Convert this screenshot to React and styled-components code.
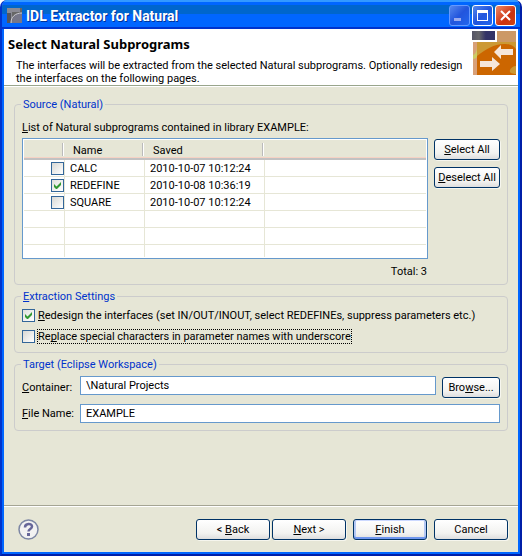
import React, { useState } from "react";
import styled, { createGlobalStyle, css } from "styled-components";

const GlobalStyle = createGlobalStyle`
  *, *::before, *::after {
    box-sizing: border-box;
  }

  body {
    margin: 0;
    background: #fff;
    color: #000;
    font: 11px/13px "Roboto", sans-serif;
  }
`;

const Dialog = styled.main`
  display: flex;
  flex-direction: column;
  min-height: calc(100vh - 1px);
  margin-right: 1px;
  padding: 0 2px 2px;
  border: 2px solid;
  border-top: 0;
  border-color: #001fa8 #001fa8 #001fa8 #0033cc;
  border-radius: 7px 7px 0 0;
  box-shadow: inset 0 0 0 2px #0066ff;
  background: #e6e6d6;
  overflow: hidden;
`;

const TitleBar = styled.header`
  display: flex;
  align-items: center;
  gap: 3px;
  height: 29px;
  margin: 0 -2px;
  padding: 2px 4px 0 5px;
  background: linear-gradient(
    #3399ff 0 2px,
    #0066ff 2px 5px,
    #0066cc 5px 14px,
    #0066ff 14px 27px,
    #0033cc 27px
  );
`;

const WindowTitle = styled.h1`
  flex: 1;
  margin: 0;
  color: #fff;
  font: bold 14px/18px "Roboto", sans-serif;
  text-shadow: 1px 1px #003399;
  white-space: nowrap;
`;

const CaptionButton = styled.button`
  width: 21px;
  height: 21px;
  padding: 0;
  border: 1px solid ${({ $dim }) => ($dim ? "#6699ff" : "#fff")};
  border-radius: 3px;
  background: ${({ $close }) =>
    $close
      ? "linear-gradient(135deg, #ee8866, #cc3311 60%, #cc4411)"
      : "linear-gradient(135deg, #5588ee, #2255dd 50%, #2266ee)"};

  svg {
    display: block;
  }
`;

const CaptionButtons = styled.div`
  display: flex;
  gap: 2px;
`;

const Banner = styled.div`
  display: flex;
  justify-content: space-between;
  height: 57px;
  padding: 0 2px 0 4px;
  border-bottom: 1px solid #99a58c;
  box-shadow: 0 1px #fff;
  background: #fff;
`;

const BannerTitle = styled.h2`
  margin: 7px 0;
  font: bold 13px/16px "Noto Sans", sans-serif;
`;

const BannerText = styled.p`
  max-width: 464px;
  margin: 0;
  padding-left: 8px;
`;

const BannerImage = styled.svg`
  flex: none;
  margin-top: 2px;
`;

const Content = styled.div`
  display: flex;
  flex: 1;
  flex-direction: column;
  gap: 5px;
  padding: 12px 10px;
`;

const Group = styled.fieldset`
  min-width: 0;
  margin: 0;
  padding: ${({ $top }) => $top}px 7px ${({ $bottom }) => $bottom}px;
  border: 1px solid #cccccc;
  border-radius: 4px;
`;

const Legend = styled.legend`
  margin-left: -1px;
  padding: 0 2px;
  color: #0033cc;
`;

const Mnemonic = styled.u`
  text-underline-offset: 1px;
  text-decoration-thickness: 1px;
  text-decoration-skip-ink: none;
`;

const SourceGrid = styled.div`
  display: grid;
  grid-template-columns: 1fr 66px;
  column-gap: 6px;
  margin-top: 4px;
`;

const TableBox = styled.div`
  padding: 1px;
  border: 1px solid #6699cc;
  background: #fff;
`;

const Table = styled.table`
  width: 100%;
  border-collapse: separate;
  border-spacing: 0;
  table-layout: fixed;
`;

const HeadCell = styled.th`
  position: relative;
  height: 20px;
  padding: 2px 0 0 8px;
  border-bottom: 2px solid #c2c2c2;
  background: linear-gradient(#e6e6d6 17px, #f6d2c4 17px);
  font-weight: normal;
  text-align: left;

  &:not(:last-child)::after {
    content: "";
    position: absolute;
    top: 3px;
    right: 1px;
    width: 2px;
    height: 13px;
    border-left: 1px solid #bbbbbb;
    background: #fff;
  }
`;

const Cell = styled.td`
  height: ${({ $last }) => ($last ? 12 : 17)}px;
  padding: 1px 0 0 5px;
  border: solid #e6e6d6;
  border-width: 0 1px ${({ $last }) => ($last ? 0 : 1)}px 0;

  &:first-child {
    padding: 0;
  }

  &:last-child {
    border-right: 0;
  }
`;

const CheckBox = styled.input.attrs({ type: "checkbox" })`
  flex: none;
  appearance: none;
  display: block;
  width: 13px;
  height: 13px;
  margin: 0;
  border: 1px solid #336699;
  background: linear-gradient(135deg, #d8d8d4, #fff);

  td > & {
    margin-left: auto;
  }

  &:checked {
    background:
      url("data:image/svg+xml,%3Csvg xmlns='http://www.w3.org/2000/svg' viewBox='0 0 11 11'%3E%3Cpath d='M2 4v3l2 2h1l4-4V2L4.500 6.500z' fill='%23339933'/%3E%3C/svg%3E"),
      linear-gradient(135deg, #e0e0dc, #fff);
  }

  &:focus {
    outline: none;
  }
`;

const SideButtons = styled.div`
  display: flex;
  flex-direction: column;
  gap: 7px;
  padding-top: 1px;
`;

const Button = styled.button`
  width: ${({ $width }) => ($width ? `${$width}px` : "100%")};
  height: 21px;
  padding: 0;
  border: 1px solid #003366;
  border-radius: 3px;
  background: linear-gradient(#fff, #f2f2f0 70%, #dedede);
  box-shadow: 1px 1px #f6f6ee;
  color: #000;
  font: inherit;
  white-space: nowrap;

  ${({ $primary }) =>
    $primary &&
    css`
      box-shadow:
        inset 0 -2px #6f96ee,
        inset 0 1px #ccd9ff,
        inset 2px 0 #b4c8f4,
        inset -2px 0 #b4c8f4,
        1px 1px #f6f6ee;
    `}
`;

const Total = styled.div`
  margin: 6px 73px 0 0;
  text-align: right;
`;

const OptionRow = styled.div`
  display: flex;
  align-items: center;
  gap: 2px;
  height: 15px;

  & + & {
    margin-top: 6px;
  }
`;

const OptionLabel = styled.label`
  border: 1px ${({ $focused }) => ($focused ? "dotted #000" : "solid transparent")};
  white-space: nowrap;
`;

const TargetRow = styled.div`
  display: flex;
  min-height: ${({ $tall }) => ($tall ? 22 : 19)}px;

  & + & {
    margin-top: 6px;
  }
`;

const FieldLabel = styled.label`
  align-self: center;
  width: 58px;
`;

const TextField = styled.input.attrs({ type: "text" })`
  flex: 1;
  min-width: 0;
  height: 19px;
  padding: 0 5px;
  border: 1px solid #6699cc;
  background: #fff;
  color: #000;
  font: inherit;

  &:focus {
    outline: none;
  }
`;

const BrowseSlot = styled.div`
  align-self: flex-end;
  margin-left: 6px;
`;

const Footer = styled.footer`
  display: flex;
  align-items: flex-start;
  height: 47px;
  padding: 13px 10px 0 14px;
  border-top: 1px solid #a5a594;
  box-shadow: inset 0 1px #fff;
`;

const HelpButton = styled.button`
  margin-right: auto;
  padding: 0;
  border: 0;
  background: none;

  svg {
    display: block;
  }
`;

const FooterButtons = styled.div`
  display: flex;
  margin-left: ${({ $gap }) => $gap}px;
  gap: 2px;
`;

const programs = [
  { name: "CALC", saved: "2010-10-07 10:12:24" },
  { name: "REDEFINE", saved: "2010-10-08 10:36:19" },
  { name: "SQUARE", saved: "2010-10-07 10:12:24" },
];

const names = programs.map((program) => program.name);

function AppIcon() {
  return (
    <svg width="16" height="16" viewBox="0 0 16 16" aria-hidden="true">
      <rect width="15" height="15" fill="#666666" />
      <path d="M0 0h13v4H5v11H0z" fill="#8a8a94" />
      <path d="M0 5h4v10H0z" fill="#55555c" />
      <path d="M5 15C5 9 8 5 15 5v10z" fill="#777788" />
      <path d="M4 15C4 9 8 5 15 5" fill="none" stroke="#ccccd4" />
    </svg>
  );
}

function BannerPicture() {
  return (
    <BannerImage width="44" height="44" viewBox="0 0 44 44" aria-hidden="true">
      <defs>
        <linearGradient id="navy">
          <stop offset="0" stopColor="#555566" />
          <stop offset="0.3" stopColor="#66666a" />
          <stop offset="0.6" stopColor="#333366" />
          <stop offset="1" stopColor="#333366" />
        </linearGradient>
      </defs>
      <rect width="23" height="9" fill="url(#navy)" />
      <rect x="25" width="19" height="11" fill="#cc9966" />
      <rect x="1" y="11" width="43" height="33" fill="#cc9933" />
      <path d="M5 25C14 18 22 13 32 13c6 0 9 1 12 5v17c-3 0-5 2-6 4-1 3 2 4 6 4v1H5z" fill="#cc6600" />
      <rect x="1" y="11" width="4" height="33" fill="#d8a078" />
      <path d="M1 24c2 0 4-4 4-8v10c-1 1-2 2-4 2z" fill="#cccc66" />
      <path d="M22 21l7-7v4h12v6H29v4z" fill="#f6e6d8" />
      <path d="M28 33l-8-7v4H8v6h12v4z" fill="#f6e6d8" />
    </BannerImage>
  );
}

function App() {
  const [selected, setSelected] = useState(["REDEFINE"]);
  const [redesign, setRedesign] = useState(true);
  const [replace, setReplace] = useState(false);

  const toggle = (name) =>
    setSelected(
      selected.includes(name)
        ? selected.filter((item) => item !== name)
        : [...selected, name]
    );

  return (
    <>
      <GlobalStyle />
      <Dialog>
        <TitleBar>
          <AppIcon />
          <WindowTitle>IDL Extractor for Natural</WindowTitle>
          <CaptionButtons>
            <CaptionButton $dim aria-label="Minimize">
              <svg width="19" height="19" viewBox="0 0 19 19">
                <rect x="4" y="12" width="7" height="3" fill="#99aaee" />
              </svg>
            </CaptionButton>
            <CaptionButton aria-label="Maximize">
              <svg width="19" height="19" viewBox="0 0 19 19">
                <path d="M4 4h11v11H4zM5 7v7h9V7z" fill="#fff" fillRule="evenodd" />
              </svg>
            </CaptionButton>
            <CaptionButton $close aria-label="Close">
              <svg width="19" height="19" viewBox="0 0 19 19">
                <path d="M5 5l9 9M14 5l-9 9" stroke="#fff" strokeWidth="2" />
              </svg>
            </CaptionButton>
          </CaptionButtons>
        </TitleBar>

        <Banner>
          <div>
            <BannerTitle>Select Natural Subprograms</BannerTitle>
            <BannerText>
              The interfaces will be extracted from the selected Natural
              subprograms. Optionally redesign the interfaces on the following
              pages.
            </BannerText>
          </div>
          <BannerPicture />
        </Banner>

        <Content>
          <Group $top={10} $bottom={6}>
            <Legend>Source (Natural)</Legend>
            <div id="list-label">
              <Mnemonic>L</Mnemonic>ist of Natural subprograms contained in
              library EXAMPLE:
            </div>
            <SourceGrid>
              <TableBox>
                <Table aria-labelledby="list-label">
                  <colgroup>
                    <col width="41" />
                    <col width="80" />
                    <col width="120" />
                    <col />
                  </colgroup>
                  <thead>
                    <tr>
                      <HeadCell />
                      <HeadCell>Name</HeadCell>
                      <HeadCell>Saved</HeadCell>
                      <HeadCell />
                    </tr>
                  </thead>
                  <tbody>
                    {programs.map(({ name, saved }) => (
                      <tr key={name}>
                        <Cell>
                          <CheckBox
                            aria-label={name}
                            checked={selected.includes(name)}
                            onChange={() => toggle(name)}
                          />
                        </Cell>
                        <Cell>{name}</Cell>
                        <Cell>{saved}</Cell>
                        <Cell />
                      </tr>
                    ))}
                    {[false, false, true].map((last, i) => (
                      <tr key={i}>
                        <Cell $last={last} />
                        <Cell $last={last} />
                        <Cell $last={last} />
                        <Cell $last={last} />
                      </tr>
                    ))}
                  </tbody>
                </Table>
              </TableBox>
              <SideButtons>
                <Button onClick={() => setSelected(names)}>
                  <Mnemonic>S</Mnemonic>elect All
                </Button>
                <Button onClick={() => setSelected([])}>
                  <Mnemonic>D</Mnemonic>eselect All
                </Button>
              </SideButtons>
            </SourceGrid>
            <Total>Total: {programs.length}</Total>
          </Group>

          <Group $top={5} $bottom={8}>
            <Legend>
              <Mnemonic>E</Mnemonic>xtraction Settings
            </Legend>
            <OptionRow>
              <CheckBox
                id="redesign"
                checked={redesign}
                onChange={() => setRedesign(!redesign)}
              />
              <OptionLabel htmlFor="redesign">
                <Mnemonic>R</Mnemonic>edesign the interfaces (set
                IN/OUT/INOUT, select REDEFINEs, suppress parameters etc.)
              </OptionLabel>
            </OptionRow>
            <OptionRow>
              <CheckBox
                id="replace"
                checked={replace}
                onChange={() => setReplace(!replace)}
              />
              <OptionLabel $focused htmlFor="replace">
                Re<Mnemonic>p</Mnemonic>lace special characters in parameter
                names with underscore
              </OptionLabel>
            </OptionRow>
          </Group>

          <Group $top={5} $bottom={7}>
            <Legend>Target (Eclipse Workspace)</Legend>
            <TargetRow $tall>
              <FieldLabel htmlFor="container">
                <Mnemonic>C</Mnemonic>ontainer:
              </FieldLabel>
              <TextField id="container" defaultValue="\Natural Projects" />
              <BrowseSlot>
                <Button $width={58}>
                  Bro<Mnemonic>w</Mnemonic>se...
                </Button>
              </BrowseSlot>
            </TargetRow>
            <TargetRow>
              <FieldLabel htmlFor="file-name">
                <Mnemonic>F</Mnemonic>ile Name:
              </FieldLabel>
              <TextField id="file-name" defaultValue="EXAMPLE" />
            </TargetRow>
          </Group>
        </Content>

        <Footer>
          <HelpButton aria-label="Help">
            <svg width="21" height="21" viewBox="0 0 21 21">
              <circle cx="10.5" cy="10.5" r="9.500" fill="#f2f2f2" stroke="#7c86a4" strokeWidth="1.500" />
              <path d="M7 8.500C7 4 14 4 14 7.500c0 2.500-3.500 2.500-3.500 5" fill="none" stroke="#666699" strokeWidth="2.500" />
              <rect x="9" y="14" width="3" height="3" fill="#666699" />
            </svg>
          </HelpButton>
          <FooterButtons $gap={0}>
            <Button $width={74}>
              &lt; <Mnemonic>B</Mnemonic>ack
            </Button>
            <Button $width={74}>
              <Mnemonic>N</Mnemonic>ext &gt;
            </Button>
          </FooterButtons>
          <FooterButtons $gap={7}>
            <Button $width={74} $primary>
              <Mnemonic>F</Mnemonic>inish
            </Button>
          </FooterButtons>
          <FooterButtons $gap={7}>
            <Button $width={74}>Cancel</Button>
          </FooterButtons>
        </Footer>
      </Dialog>
    </>
  );
}

export default App;
